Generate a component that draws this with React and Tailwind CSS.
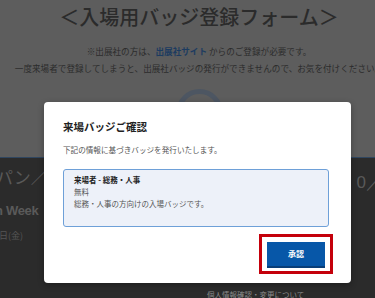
export default function App() {
  const jp = "font-['Noto_Sans_CJK_JP','Noto_Sans',sans-serif]";
  return (
    <div className={`relative w-[375px] h-[298px] overflow-hidden bg-[#2b2b2b] ${jp}`}>
      {/* dimmed page, upper light section */}
      <div className="h-[157px] overflow-hidden bg-[#5d5d5d]">
        <div className="w-[398px] pt-[3px] text-center">
          <h1 className="whitespace-nowrap text-[20px] leading-[28px] font-medium text-[#2b2b2b]">＜入場用バッジ登録フォーム＞</h1>
          <p className="mt-[12px] whitespace-nowrap text-[8.6px] leading-[17px] text-[#2c2c2c]">
            ※出展社の方は、<span className="font-bold text-[#1c3b60]">出展社サイト</span> からのご登録が必要です。
          </p>
          <p className="whitespace-nowrap text-[8.6px] leading-[17px] text-[#2c2c2c]">
            一度来場者で登録してしまうと、出展社バッジの発行ができませんので、お気を付けください。
          </p>
          <div className="mx-auto mt-[12px] h-[47px] w-[47px] rounded-full border-[5px] border-[#4d5662]" />
        </div>
      </div>

      {/* dimmed page, dark section */}
      <div className="h-[141px] border-t border-[#2f4660] bg-[#2b2b2b]">
        <div className="mt-[7px] flex justify-between whitespace-nowrap text-[17px] leading-[24px] text-[#595959]">
          <span className="-ml-[4px]">パン／ｘ</span>
          <span className="-mr-[8px] mt-[6px] font-['Liberation_Sans',sans-serif]">0／</span>
        </div>
        <div className="-ml-[5px] mt-[6px] whitespace-nowrap font-['Liberation_Sans',sans-serif] text-[13px] leading-[20px] font-bold tracking-[-0.3px] text-[#5a5a5a]">
          n Week
        </div>
        <div className="-ml-[1px] mt-[8px] text-[9px] leading-[13px] text-[#555555]">日(金)</div>
        <div className="mt-[47px] pl-[207px] whitespace-nowrap text-[7.5px] leading-[11px] text-[#8a8a8a]">
          個人情報確認・変更について
        </div>
      </div>

      {/* modal */}
      <div className="absolute left-[44px] top-[102px] h-[181px] w-[307px] rounded-[4px] bg-white pl-[19px] pr-[18px] pt-[18px] shadow-[0_2px_6px_rgba(0,0,0,0.3)]">
        <h2 className="text-[10.5px] leading-[14px] font-bold text-[#222222]">来場バッジご確認</h2>
        <p className="mt-[10px] text-[7.6px] leading-[11px] text-[#555555]">下記の情報に基づきバッジを発行いたします。</p>
        <div className="mt-[14px] mr-[4px] h-[58px] rounded-[3px] border border-[#6ea0d8] bg-[#edf1f9] pl-[10px] pt-[4px]">
          <p className="text-[7.5px] leading-[12px] font-bold text-[#222222]">来場者 - 総務・人事</p>
          <p className="text-[7.5px] leading-[12px] text-[#555555]">無料</p>
          <p className="text-[7.5px] leading-[12px] text-[#555555]">総務・人事の方向けの入場バッジです。</p>
        </div>
        <div className="mt-[7px] flex justify-end">
          <div className="border-[3px] border-[#c4000b] px-[5px] pt-[5px] pb-[3px]">
            <button className="flex h-[26px] w-[58px] items-center justify-center border-b-2 border-[#083e78] bg-[#0757a8] text-[8px] font-bold text-white">
              承認
            </button>
          </div>
        </div>
      </div>
    </div>
  );
}
